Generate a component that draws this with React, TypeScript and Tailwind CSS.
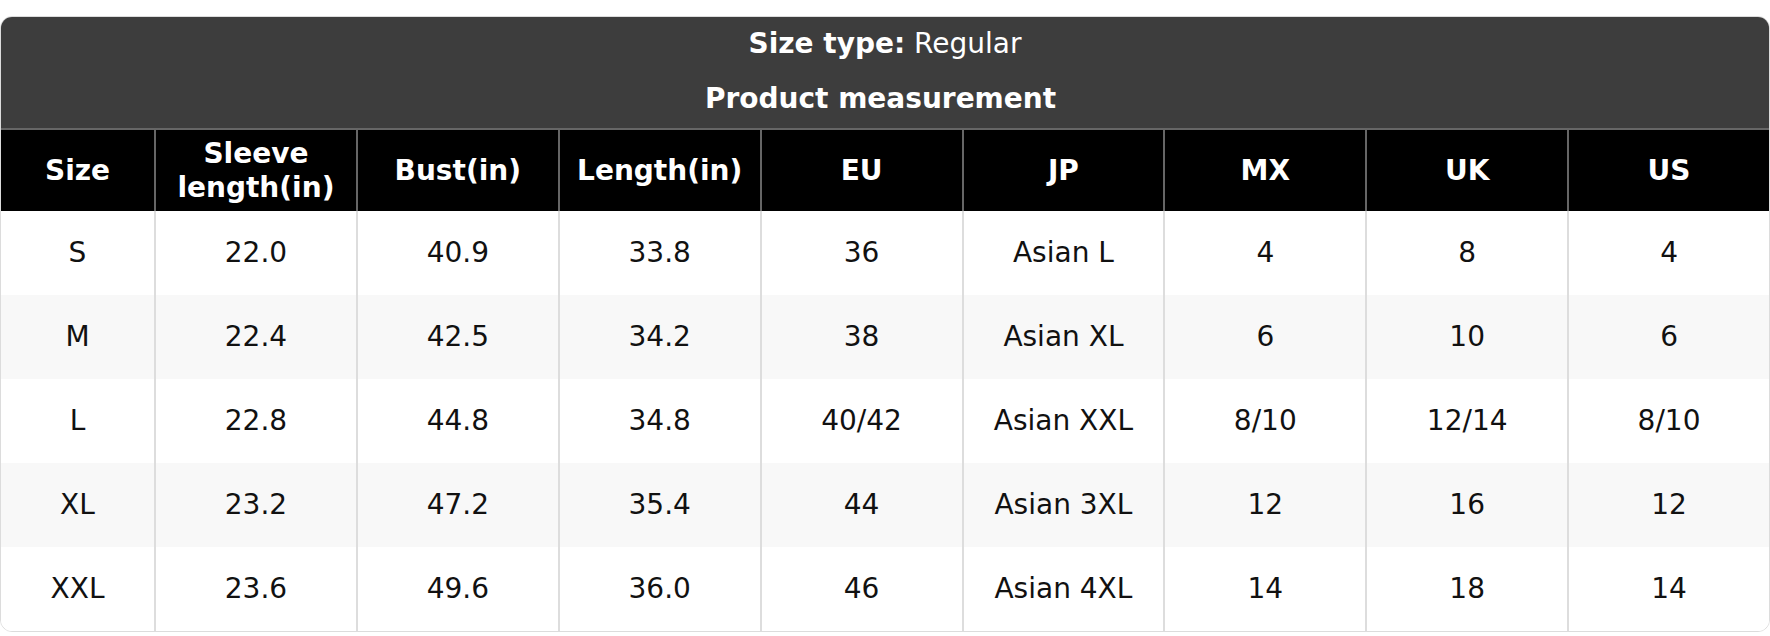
import React from "react";

const headers = ["Size", "Sleeve length(in)", "Bust(in)", "Length(in)", "EU", "JP", "MX", "UK", "US"];
const rows = [
  ["S", "22.0", "40.9", "33.8", "36", "Asian L", "4", "8", "4"],
  ["M", "22.4", "42.5", "34.2", "38", "Asian XL", "6", "10", "6"],
  ["L", "22.8", "44.8", "34.8", "40/42", "Asian XXL", "8/10", "12/14", "8/10"],
  ["XL", "23.2", "47.2", "35.4", "44", "Asian 3XL", "12", "16", "12"],
  ["XXL", "23.6", "49.6", "36.0", "46", "Asian 4XL", "14", "18", "14"],
];

export default function App() {
  return (
    <div className="w-[1770px] h-[636px] bg-white pt-[16px] font-['DejaVu_Sans',sans-serif]">
      <div className="rounded-[12px] border border-[#dcdcdc] overflow-hidden">
        <div className="bg-[#3d3d3d] text-white text-[28px] text-center pt-[10px] pb-[13px]">
          <div className="leading-[33px]">
            <span className="font-bold">Size type:</span> Regular
          </div>
          <div className="leading-[33px] mt-[22px] pr-[9px] font-bold">Product measurement</div>
        </div>
        <div className="grid grid-cols-[153px_repeat(8,1fr)] bg-black border-t-2 border-[#666666] h-[83px]">
          {headers.map((h, i) => (
            <div
              key={h}
              className={
                "flex items-center justify-center text-center text-white font-bold text-[28px] leading-[34px] px-2 " +
                (i > 0 ? "border-l-2 border-[#666666]" : "")
              }
            >
              {h === "Sleeve length(in)" ? (
                <span>
                  Sleeve
                  <br />
                  length(in)
                </span>
              ) : (
                h
              )}
            </div>
          ))}
        </div>
        {rows.map((r, ri) => (
          <div
            key={ri}
            className={
              "grid grid-cols-[153px_repeat(8,1fr)] h-[84px] " + (ri % 2 === 1 ? "bg-[#f8f8f8]" : "bg-white")
            }
          >
            {r.map((c, i) => (
              <div
                key={i}
                className={
                  "flex items-center justify-center text-[#111111] text-[28px] leading-[34px] " +
                  (i > 0 ? "border-l-2 border-[#dddddd]" : "")
                }
              >
                {c}
              </div>
            ))}
          </div>
        ))}
      </div>
    </div>
  );
}
